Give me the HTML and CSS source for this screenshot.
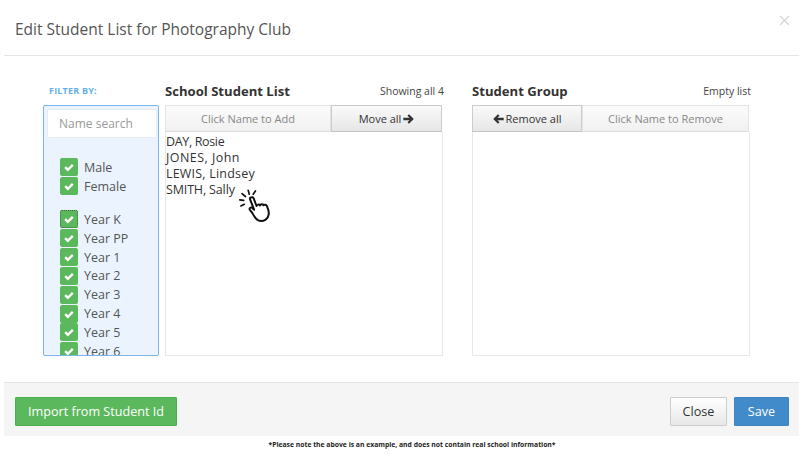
FILE: index.html
```html
<!DOCTYPE html>
<html lang="en">
<head>
<meta charset="utf-8">
<title>Edit Student List</title>
<link rel="stylesheet" href="styles.css">
</head>
<body>
<div class="modal">
  <header class="modal-header">
    <h1 class="modal-title">Edit Student List for Photography Club</h1>
    <svg class="close-x" width="11" height="11" viewBox="0 0 11 11"><path d="M1 1l9 9M10 1l-9 9" stroke="#d4d4d4" stroke-width="1.2" fill="none"/></svg>
  </header>
  <main class="modal-body">
    <section class="filter-col">
      <div class="filter-label">FILTER BY:</div>
      <div class="filter-panel">
        <input class="name-search" type="text" placeholder="Name search">
        <div class="check-group first">
          <div class="check-row"><span class="check"><svg viewBox="0 0 12 12"><path d="M2.2 6.2l2.6 2.6 5-5" /></svg></span>Male</div>
          <div class="check-row"><span class="check"><svg viewBox="0 0 12 12"><path d="M2.2 6.2l2.6 2.6 5-5" /></svg></span>Female</div>
        </div>
        <div class="check-group">
          <div class="check-row"><span class="check focus"><svg viewBox="0 0 12 12"><path d="M2.2 6.2l2.6 2.6 5-5" /></svg></span>Year K</div>
          <div class="check-row"><span class="check"><svg viewBox="0 0 12 12"><path d="M2.2 6.2l2.6 2.6 5-5" /></svg></span>Year PP</div>
          <div class="check-row"><span class="check"><svg viewBox="0 0 12 12"><path d="M2.2 6.2l2.6 2.6 5-5" /></svg></span>Year 1</div>
          <div class="check-row"><span class="check"><svg viewBox="0 0 12 12"><path d="M2.2 6.2l2.6 2.6 5-5" /></svg></span>Year 2</div>
          <div class="check-row"><span class="check"><svg viewBox="0 0 12 12"><path d="M2.2 6.2l2.6 2.6 5-5" /></svg></span>Year 3</div>
          <div class="check-row"><span class="check"><svg viewBox="0 0 12 12"><path d="M2.2 6.2l2.6 2.6 5-5" /></svg></span>Year 4</div>
          <div class="check-row"><span class="check"><svg viewBox="0 0 12 12"><path d="M2.2 6.2l2.6 2.6 5-5" /></svg></span>Year 5</div>
          <div class="check-row"><span class="check"><svg viewBox="0 0 12 12"><path d="M2.2 6.2l2.6 2.6 5-5" /></svg></span>Year 6</div>
        </div>
      </div>
    </section>
    <section class="list-col">
      <div class="list-head"><h2 class="list-title">School Student List</h2><span class="list-count">Showing all 4</span></div>
      <div class="btn-bar">
        <div class="bar-hint hint-add">Click Name to Add</div>
        <div class="bar-btn btn-move">Move all<svg class="arrow" width="11" height="10" viewBox="0 0 11 10"><path d="M6 .2L10.800 5 6 9.800 4.500 8.300 6.500 6.300H.3V3.700H6.500L4.500 1.700z"/></svg></div>
      </div>
      <div class="list-box names">
        <div class="name-day">DAY, Rosie</div>
        <div class="name-jones">JONES, John</div>
        <div class="name-lewis">LEWIS, Lindsey</div>
        <div class="name-smith">SMITH, Sally</div>
        <svg class="hand" viewBox="0 0 34 34" fill="none" stroke="#111" stroke-linecap="round" stroke-linejoin="round">
          <path d="M10 3l1 3.5M4.500 6l3 2.500M2.500 11.500l3.500.5M16.500 3.500l-2 3M3.500 17l3-1.500" stroke-width="1.500"/>
          <path fill="#fff" stroke-width="1.800" d="M12 9.500c1.300-.8 2.600-.3 3 1l2.500 6.500c.5-1.400 2.300-1.700 3.100-.5.500-1.200 2.300-1.500 3.100-.2.700-.8 2.400-.7 3 .6 1.200 2.600 2 5 1.700 7.500-.3 2.300-1.400 3.700-2.800 4.800-2 1.300-5.300 1.400-7.300.2-2.200-1.400-3.300-3.700-4.500-6l-2.300-3c-.8-1.300.7-2.700 2-1.800l1.800 1.700-3.600-9.300c-.3-.8 0-1.300.3-1.500z"/>
        </svg>
      </div>
    </section>
    <section class="list-col group-col">
      <div class="list-head"><h2 class="list-title">Student Group</h2><span class="list-count">Empty list</span></div>
      <div class="btn-bar">
        <div class="bar-btn btn-remove"><svg class="arrow" width="11" height="10" viewBox="0 0 11 10"><path d="M5 .2L.2 5 5 9.800 6.500 8.300 4.500 6.300h6.200V3.700H4.500l2-2z"/></svg>Remove all</div>
        <div class="bar-hint hint-remove">Click Name to Remove</div>
      </div>
      <div class="list-box"></div>
    </section>
  </main>
  <footer class="modal-footer">
    <button class="btn btn-import" type="button">Import from Student Id</button>
    <div class="footer-right">
      <button class="btn btn-close" type="button">Close</button>
      <button class="btn btn-save" type="button">Save</button>
    </div>
  </footer>
</div>
<p class="note">*Please note the above is an example, and does not contain real school information*</p>
</body>
</html>
```
FILE: styles.css
```css
* { box-sizing: border-box; }
html, body { margin: 0; padding: 0; }
body { width: 803px; height: 456px; overflow: hidden; background: #fff; font-family: "Open Sans", sans-serif; color: #333; }
.modal { margin: 0 4px; width: 795px; }
.modal-header { height: 56px; border-bottom: 1px solid #e5e5e5; display: flex; justify-content: space-between; align-items: flex-start; padding: 15px 9px 0 11px; }
.modal-title { margin: 3px 0 0; font-size: 15.500px; line-height: 22px; font-weight: 400; color: #555; }
.close-x { margin-top: 0; margin-right: 0; }
.modal-body { height: 326px; display: flex; padding: 26px 0 0 39px; align-items: flex-start; }
.filter-col { width: 116px; margin-right: 6px; }
.filter-label { height: 23px; padding: 3px 0 0 6px; font-size: 9px; line-height: 12px; font-weight: 700; color: #64b0ea; letter-spacing: .2px; }
.filter-panel { height: 251px; overflow: hidden; background: #ebf4fe; border: 1px solid #7cb6e8; border-radius: 2px; padding: 3px 3px 0; }
.name-search { display: block; width: 110px; height: 29px; border: 1px solid #e6edf5; background: #fff; padding: 0 11px; font: 12px "Open Sans", sans-serif; outline: none; }
.name-search::placeholder { color: #999; opacity: 1; }
.check-group { padding-left: 13px; margin-top: 14.300px; }
.check-group.first { margin-top: 20px; }
.check-row { display: flex; align-items: center; height: 18.850px; font-size: 12.500px; color: #555; white-space: nowrap; }
.check { width: 18px; height: 18px; flex: none; background: #5cb85c; border-radius: 2px; margin-right: 6px; display: flex; align-items: center; justify-content: center; }
.check.focus { outline: 1px dotted #3a6b3a; outline-offset: -1px; }
.check svg { width: 12px; height: 12px; fill: none; stroke: #fff; stroke-width: 2.400; }
.list-col { width: 278px; margin-right: 29px; }
.list-head { height: 23px; display: flex; justify-content: space-between; align-items: flex-start; }
.list-title { margin: 0; font-size: 13.100px; line-height: 18px; font-weight: 700; color: #333; }
.list-count { font-size: 10.500px; line-height: 18px; color: #444; margin-right: -1px; }
.btn-bar { display: flex; height: 27px; font-size: 11px; }
.bar-hint { background: linear-gradient(#fcfcfc, #f0f0f0); border: 1px solid #e3e3e3; border-bottom-color: #ddd; color: #888; display: flex; align-items: center; justify-content: center; }
.bar-btn { background: linear-gradient(#fafafa, #e6e6e6); border: 1px solid #ccc; border-bottom-color: #c4c4c4; color: #333; display: flex; align-items: center; justify-content: center; gap: 2px; }
.hint-add { width: 166px; }
.btn-move { width: 111px; }
.btn-remove { width: 110px; }
.hint-remove { width: 167px; }
.list-box { position: relative; height: 224px; background: #fff; border: 1px solid #e8e8e8; border-top: 0; }
.names { font-size: 12.500px; line-height: 16px; color: #333; padding-top: 2px; }
.name-day { letter-spacing: -.35px; }
.name-jones { letter-spacing: .45px; }
.name-lewis { letter-spacing: .2px; }
.name-smith { letter-spacing: -.15px; }
.hand { position: absolute; left: 71px; top: 55px; width: 38px; height: 38px; }
.arrow { fill: #333; flex: none; }
.modal-footer { height: 54px; background: #f5f5f5; border-top: 1px solid #e5e5e5; display: flex; justify-content: space-between; align-items: flex-start; padding: 14px 10px 0 11px; }
.footer-right { display: flex; gap: 7px; }
.btn { height: 29px; font: 12.600px "Open Sans", sans-serif; padding: 0; border-radius: 1px; }
.btn-import { width: 162px; background: #5cb85c; color: #fff; border: 1px solid #4cae4c; }
.btn-close { width: 57px; background: linear-gradient(#fff, #e8e8e8); color: #333; border: 1px solid #ccc; }
.btn-save { width: 55px; background: #428bca; color: #fff; border: 1px solid #3f84c0; }
.note { margin: 4px 0 0 21px; text-align: center; font-size: 6.800px; line-height: 10px; font-weight: 700; color: #222; }
```
